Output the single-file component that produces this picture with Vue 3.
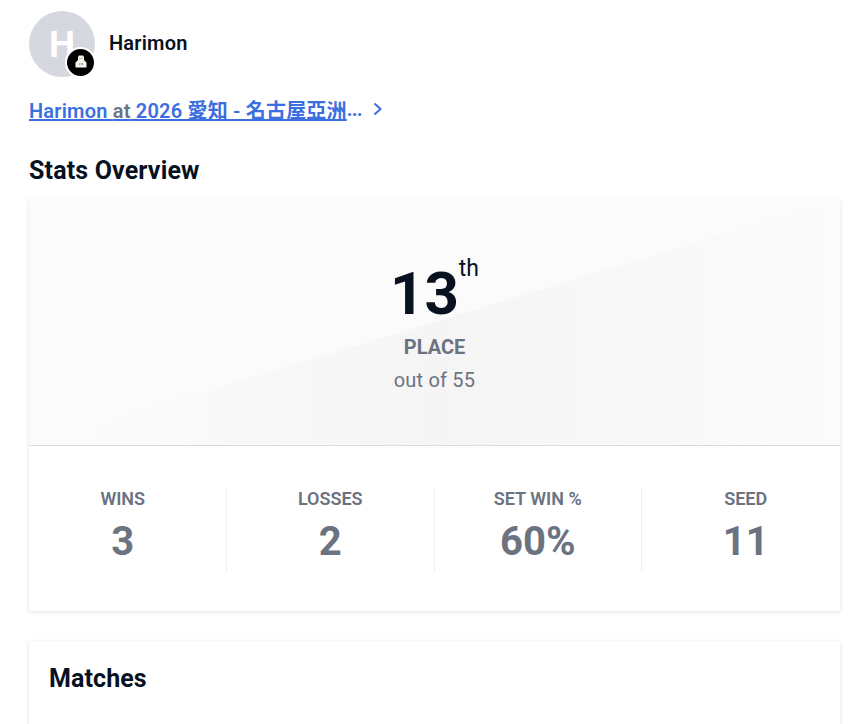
<script setup>
const stats = [
  { label: 'WINS', value: '3' },
  { label: 'LOSSES', value: '2' },
  { label: 'SET WIN %', value: '60%' },
  { label: 'SEED', value: '11' },
];
</script>

<template>
  <div class="page">
    <div class="player">
      <div class="avatar">
        <span class="initial">H</span>
        <div class="badge">
          <svg class="badge-icon" width="12" height="13" viewBox="0 0 12 13">
            <path d="M4 .5h4l1 1.500v3l2.500 2.500V12.500H.5V7.500L3 5V2z" fill="#f7f4ec" />
            <rect x="4.500" y="3" width="1" height="1" fill="#8a8a8a" />
            <rect x="6.500" y="3" width="1" height="1" fill="#8a8a8a" />
            <rect x="4" y="8" width="1.500" height="2" fill="#d9a860" />
            <rect x="6.500" y="8" width="1.500" height="2" fill="#7f9fc6" />
          </svg>
        </div>
      </div>
      <span class="player-name">Harimon</span>
    </div>

    <div class="event-row">
      <a class="event-link" href="#">Harimon <span class="at">at</span> 2026 愛知 - 名古屋亞洲</a><span class="dots">...</span>
      <svg class="chevron" width="12" height="16" viewBox="0 0 12 16">
        <path d="M3.500 2.500l6 5.500-6 5.500" fill="none" stroke="#3b6fe0" stroke-width="2" />
      </svg>
    </div>

    <h2 class="section-title">Stats Overview</h2>

    <div class="card overview">
      <div class="hero">
        <div class="place">
          <span class="place-num">13</span><span class="place-suffix">th</span>
        </div>
        <div class="place-label">PLACE</div>
        <div class="place-total">out of 55</div>
      </div>
      <div class="stats">
        <div v-for="stat in stats" :key="stat.label" class="stat">
          <div class="stat-label">{{ stat.label }}</div>
          <div class="stat-value">{{ stat.value }}</div>
        </div>
      </div>
    </div>

    <div class="card matches">
      <h2 class="matches-title">Matches</h2>
    </div>
  </div>
</template>

<style>
html,
body {
  margin: 0;
  background: #fff;
  overflow: hidden;
}
</style>

<style scoped>
.page {
  height: 724px;
  overflow: hidden;
  box-sizing: border-box;
  padding: 11px 28px 0 29px;
  font-family: Roboto, "Noto Sans CJK TC", sans-serif;
  color: #07111f;
}

.player {
  display: flex;
  align-items: center;
  gap: 14px;
  height: 66px;
}

.avatar {
  position: relative;
  width: 66px;
  height: 66px;
  border-radius: 50%;
  background: #d5d8de;
  display: flex;
  align-items: center;
  justify-content: center;
}

.initial {
  font-size: 37px;
  font-weight: 700;
  color: #fff;
  line-height: 1;
}

.badge {
  position: absolute;
  right: -1px;
  bottom: -1px;
  box-sizing: border-box;
  width: 31px;
  height: 31px;
  border: 2px solid #fff;
  border-radius: 50%;
  background: #000;
  display: flex;
  align-items: center;
  justify-content: center;
}

.badge-icon {
  margin-bottom: 2px;
}

.player-name {
  font-size: 20px;
  font-weight: 600;
  letter-spacing: 0.2px;
  margin-bottom: 3px;
}

.event-row {
  display: flex;
  align-items: center;
  margin-top: 20px;
  height: 24px;
  font-size: 20px;
  font-weight: 600;
  color: #3b6fe0;
}

.event-link {
  color: #3b6fe0;
  text-decoration: underline;
  letter-spacing: 0.2px;
}

.at {
  color: #6b7280;
}

.dots {
  font-weight: 700;
  letter-spacing: -0.8px;
}

.chevron {
  margin-left: 9px;
}

.section-title {
  margin: 0;
  margin-top: 34px;
  font-size: 25px;
  letter-spacing: 0.15px;
  line-height: 32px;
  font-weight: 700;
}

.card {
  background: #fff;
  box-shadow: 0 1px 4px rgba(0, 0, 0, 0.12);
}

.overview {
  margin-top: 12px;
  height: 412px;
}

.hero {
  box-sizing: border-box;
  height: 247px;
  border-bottom: 1px solid #dcdcdc;
  background:
    linear-gradient(to bottom right, #fbfbfb 50%, transparent 50%),
    linear-gradient(to right, #fcfcfc 0%, #f5f5f5 50%, #fbfbfb 100%);
  display: flex;
  flex-direction: column;
  align-items: center;
  padding-top: 59px;
}

.place {
  display: flex;
  align-items: flex-start;
  height: 72px;
}

.place-num {
  font-size: 60px;
  line-height: 72px;
  font-weight: 700;
}

.place-suffix {
  font-size: 23px;
  line-height: 24px;
  margin-top: -1px;
}

.place-label {
  margin-top: 3px;
  font-size: 20px;
  line-height: 28px;
  font-weight: 700;
  color: #6b7280;
}

.place-total {
  margin-top: 5px;
  font-size: 20px;
  letter-spacing: 0.2px;
  line-height: 28px;
  color: #6b7280;
}

.stats {
  display: grid;
  grid-template-columns: repeat(4, 1fr);
  padding: 41px 0 40px;
  margin: 0 -9.5px;
}

.stat {
  box-sizing: border-box;
  height: 85px;
  text-align: center;
  color: #6b7280;
  border-right: 1px solid #f0f0f0;
}

.stat:last-child {
  border-right: none;
}

.stat-label {
  font-size: 18px;
  line-height: 24px;
  font-weight: 600;
}

.stat-value {
  margin-top: 9px;
  font-size: 40px;
  line-height: 44px;
  font-weight: 700;
}

.matches {
  margin-top: 30px;
  height: 120px;
  padding: 22px 20px;
  box-sizing: border-box;
}

.matches-title {
  margin: 0;
  font-size: 25px;
  letter-spacing: 0.1px;
  line-height: 32px;
  font-weight: 700;
}
</style>
